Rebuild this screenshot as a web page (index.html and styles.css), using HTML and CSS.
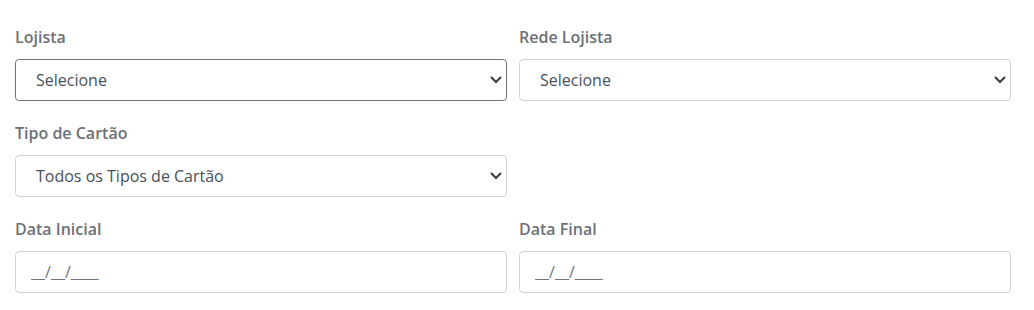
FILE: index.html
```html
<!DOCTYPE html>
<html lang="pt-BR">
<head>
<meta charset="utf-8">
<link rel="stylesheet" href="styles.css">
</head>
<body>
<form class="filters">
  <div class="group">
    <label class="label">Lojista</label>
    <div class="select-wrap">
      <select class="control focused"><option>Selecione</option></select>
      <svg class="chevron" viewBox="0 0 12 7" width="12" height="7"><path d="M1 1l5 5 5-5" fill="none" stroke="#343a40" stroke-width="2"/></svg>
    </div>
  </div>
  <div class="group">
    <label class="label">Rede Lojista</label>
    <div class="select-wrap">
      <select class="control"><option>Selecione</option></select>
      <svg class="chevron" viewBox="0 0 12 7" width="12" height="7"><path d="M1 1l5 5 5-5" fill="none" stroke="#343a40" stroke-width="2"/></svg>
    </div>
  </div>
  <div class="group">
    <label class="label">Tipo de Cartão</label>
    <div class="select-wrap">
      <select class="control"><option>Todos os Tipos de Cartão</option></select>
      <svg class="chevron" viewBox="0 0 12 7" width="12" height="7"><path d="M1 1l5 5 5-5" fill="none" stroke="#343a40" stroke-width="2"/></svg>
    </div>
  </div>
  <div class="group"></div>
  <div class="group">
    <label class="label">Data Inicial</label>
    <input class="control input" type="text" value="__/__/____">
  </div>
  <div class="group">
    <label class="label">Data Final</label>
    <input class="control input" type="text" value="__/__/____">
  </div>
</form>
</body>
</html>
```
FILE: styles.css
```css
* { box-sizing: border-box; }
body {
  margin: 0;
  background: #fff;
  font-family: "Open Sans", "Liberation Sans", sans-serif;
}
.filters {
  display: grid;
  grid-template-columns: 492px 492px;
  column-gap: 12px;
  row-gap: 20px;
  padding: 25px 0 0 15px;
}
.group {
  display: flex;
  flex-direction: column;
  min-height: 76px;
}
.label {
  font-size: 16px;
  font-weight: 600;
  line-height: 24px;
  color: #6c7075;
  margin-bottom: 10px;
}
.select-wrap {
  position: relative;
}
.chevron {
  position: absolute;
  right: 5px;
  top: 17px;
  pointer-events: none;
}
.control {
  display: block;
  width: 100%;
  height: 42px;
  border: 1px solid #ced4da;
  border-radius: 4px;
  background: #fff;
  font-family: "Open Sans", "Liberation Sans", sans-serif;
  font-size: 16px;
  color: #495057;
  padding: 0 24px 0 20px;
  outline: none;
  appearance: none;
  -webkit-appearance: none;
}
.focused { border-color: #70757a; }
.input {
  padding: 0 15px;
  color: #6c757d;
}
```
